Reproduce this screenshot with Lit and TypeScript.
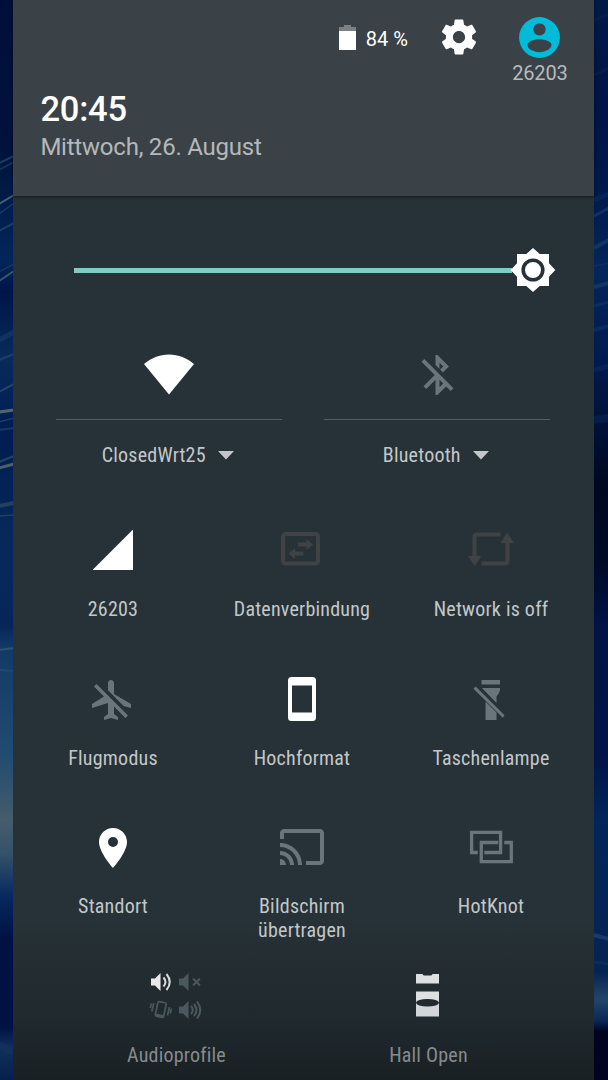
import { LitElement, html, svg, css } from "lit";
import { customElement, property } from "lit/decorators.js";

interface Icon { w: number; h: number; x?: number; y?: number; body: unknown }

/* x and y are the view box origin; they balance glyphs whose ink is off centre. */
const ICONS: Record<string, Icon> = {
  wifi: { w: 50, h: 40, y: 0.5, body: svg`<path fill="#fff" d="M0 9.6C7 3.600 15.500 0 25 0s18 3.600 25 9.600L25 40z"/>` },
  bluetooth: { w: 24, h: 24, x: -0.25, body: svg`<path fill="#68757b" d="M13 5.830l1.880 1.880-1.600 1.600 1.410 1.410 3.020-3.020L12 2h-1v5.030l2 2v-3.200zM5.410 4L4 5.410 10.590 12 5 17.590 6.410 19 11 14.410V22h1l4.290-4.290 2.300 2.290L20 18.590 5.410 4zM13 18.170v-3.760l1.880 1.880L13 18.170z"/>` },
  signal: { w: 40, h: 40, body: svg`<path fill="#fff" d="M0 40V39.500L39.500 0H40V40z"/>` },
  data: { w: 40, h: 34, x: 1, y: 1, body: svg`<rect x="2" y="2" width="35" height="29.500" rx="2.500" fill="none" stroke="#404243" stroke-width="4"/>
    <path fill="#404243" d="M17 10.500h8.500V7L32 12.700l-6.500 5.300v-3.500H17zM22.500 19.500H14V16l-6.500 5.500L14 27v-3.500h8.500z"/>` },
  network: { w: 46, h: 34, y: 1, body: svg`<path fill="none" stroke="#404243" stroke-width="4" d="M32.500 2.500H9Q6.500 2.500 6.500 5V25M13.500 31.500H36.500Q39.500 31.500 39.500 28.500V9"/>
    <path fill="#404243" d="M0 24h13.500L6.700 34zM32.500 11h13.500L39.200 0.500z"/>` },
  airplane: { w: 24, h: 24, x: 0.5, y: -0.5, body: svg`<path fill="#68757b" d="M13 9V3.500c0-.830-.670-1.500-1.500-1.500S10 2.670 10 3.500v3.680l7.830 7.830L21.500 16v-2zM3 5.270l4.990 4.990L2 14v2l8-2.500V19l-2 1.500V22l3.500-1 3.500 1v-1.500L13 19v-3.730L18.730 21 20 19.730 4.270 4z"/>` },
  portrait: { w: 28, h: 44, body: svg`<path fill="#fff" fill-rule="evenodd" d="M3.500 0h21Q28 0 28 3.500v37Q28 44 24.500 44h-21Q0 44 0 40.500v-37Q0 0 3.500 0zM4 8.500V35.500H24V8.500z"/>` },
  flashlight: { w: 31, h: 40, x: 1.5, y: -1, body: svg`<path fill="#68757b" d="M8 0h18.500v4.500H8zM8.500 8h18v1.500Q26.500 12 23 16.500V23zM12 21.500L23 32.500V40H12zM2.200 6.500L31 35.300 29.300 37.700 0 8.700z"/>` },
  place: { w: 24, h: 24, y: -0.5, body: svg`<path fill="#fff" d="M12 2C8.130 2 5 5.130 5 9c0 5.250 7 13 7 13s7-7.750 7-13c0-3.870-3.130-7-7-7zm0 9.500a2.500 2.500 0 0 1 0-5 2.500 2.500 0 0 1 0 5z"/>` },
  cast: { w: 24, h: 24, body: svg`<path fill="#68757b" d="M21 3H3c-1.100 0-2 .900-2 2v3h2V5h18v14h-7v2h7c1.100 0 2-.900 2-2V5c0-1.100-.900-2-2-2zM1 18v3h3c0-1.660-1.340-3-3-3zm0-4v2c2.760 0 5 2.240 5 5h2c0-3.870-3.130-7-7-7zm0-4v2c4.970 0 9 4.030 9 9h2c0-6.080-4.930-11-11-11z"/>` },
  hotknot: { w: 44, h: 34, x: -0.8, y: -0.5, body: svg`<g fill="none" stroke="#68757b" stroke-width="3.300"><path d="M8 22H1.800V1.800H30.800V22H14.500"/><path d="M28.500 12H11.500V31.200H41.500V12H34.500"/></g>` },
  audio: { w: 52, h: 46, body: svg`
    <path fill="#e9e9e9" d="M1 5.500h4L10.500 0V18L5 12.500H1z"/>
    <g fill="none" stroke="#d9dbdb" stroke-width="2"><path d="M13.500 4.500q4 4.500 0 9M16.500 1q6.500 8 0 16"/></g>
    <g fill="#4a5860"><path d="M29 5.500h4L38.500 0V18L33 12.500H29zM29 33.500h4l5.500-5.500V46L33 40.500h-4z"/></g>
    <g fill="none" stroke="#4a5860" stroke-width="2"><path d="M43 5.500l7 7M50 5.500l-7 7M41 33q3.500 4 0 8M44 31q5 6 0 12M47 28.500q6.500 8.500 0 17"/></g>
    <g fill="none" stroke="#4a5860" stroke-width="1.700"><rect x="6.500" y="29" width="8.500" height="15" rx="1.500" transform="rotate(12 10.700 36.500)"/><path stroke-width="2.500" d="M6 41.800l7.500 1.600"/><path d="M3.800 30l-2 8.500M1.300 30.500l-1 4.500M17.500 42.500l2-8.500M20.200 40.500l1.200-5"/></g>` },
  hall: { w: 24, h: 43, x: 0.5, body: svg`<path fill="#dfe0e1" d="M.500 0H7q.500 1.500 2 1.500h6q1.500 0 2-1.500h6.500V9.500H.500zM.500 17.500h23V26H.500z"/><path fill="#d3d6d9" d="M.500 26h23V42.500H.500z"/><ellipse cx="12" cy="28.700" rx="11.500" ry="3.800" fill="#202a2f"/>` },
};

const drawIcon = (name: string, w: number, h: number) => {
  const i = ICONS[name];
  return html`<svg width=${w} height=${h} viewBox="${i.x ?? 0} ${i.y ?? 0} ${i.w} ${i.h}">${i.body}</svg>`;
};

@customElement("qs-tile")
class QsTile extends LitElement {
  @property() icon = "";
  @property() label = "";
  @property({ type: Number }) w = 48;
  @property({ type: Number }) h = 48;
  static styles = css`
    :host { display: flex; flex-direction: column; align-items: center; min-width: 0; }
    .icon { height: 48px; display: flex; align-items: center; justify-content: center; }
    .icon svg { display: block; overflow: visible; }
    .label { margin-top: 23px; text-align: center; white-space: pre-line; }
  `;
  render() {
    return html`<div class="icon">${drawIcon(this.icon, this.w, this.h)}</div>
      <div class="label">${this.label}</div>`;
  }
}

@customElement("app-root")
class AppRoot extends LitElement {
  static styles = css`
    :host {
      display: block; position: relative; width: 608px; height: 1080px; overflow: hidden;
      background: #001039; font-family: Roboto, sans-serif; color: #c3c7c9;
    }
    .wall { position: absolute; inset: 0; display: block; }
    .panel {
      position: relative; margin-left: 13.400px; height: 1080px; width: 581px; box-sizing: border-box;
      background: linear-gradient(#273238 0 920px, #232d32 960px, #1f292e 1020px, #192023 1080px);
    }
    .header { height: 196px; box-sizing: border-box; background: #3a4248; box-shadow: 0 1px 3px #0008; padding: 16px 26.500px 0 27px; }
    .status { display: flex; justify-content: flex-end; align-items: flex-start; height: 74px; }
    .battery { display: flex; align-items: center; gap: 9.500px; height: 42px; color: #fff; font-size: 20px; }
    .battery span { padding-top: 3px; }
    .gear { margin-left: 30.500px; }
    .gear svg, .battery svg, .user svg { display: block; }
    .user { margin-left: 31.500px; width: 56px; display: flex; flex-direction: column; align-items: center; font-size: 20px; line-height: 24px; letter-spacing: -.200px; color: #b7babd; }
    .user svg { margin-top: -3.500px; margin-bottom: -1px; }
    .time { font-size: 34.500px; line-height: 38px; font-weight: 500; letter-spacing: -.200px; color: #fff; }
    .date { font-size: 24px; line-height: 28px; margin-top: 5px; letter-spacing: -.220px; color: #b4b8ba; }
    .slider { height: 48px; margin: 50px 38.500px 0 60.600px; display: flex; align-items: center; }
    .track { flex: 1; height: 5px; background: #80cbc4; }
    .knob { display: block; margin: 0 -1px 0 -3px; }
    .tiles { font-family: "Roboto Condensed", Roboto, sans-serif; font-stretch: 75%; font-size: 20px; line-height: 24px; letter-spacing: .220px; }
    .two { display: grid; grid-template-columns: 226px 226px; column-gap: 42px; margin: 57px 0 0 42.600px; }
    .dual { display: flex; flex-direction: column; align-items: center; }
    .dualicon { height: 48px; display: flex; align-items: center; }
    .dualicon svg { display: block; overflow: visible; }
    .rule { width: 100%; height: 1px; background: #48606f; margin-top: 20px; }
    .name { display: flex; align-items: center; gap: 12.500px; margin-top: 23px; margin-right: 2px; }
    .grid { display: grid; grid-template-columns: repeat(3, 189px); grid-auto-rows: 148.500px; margin: 59px 0 0 5.100px; }
    .last { display: grid; grid-template-columns: 252px 252px; margin-left: 37.100px; color: #858b8e; }
  `;

  dual(icon: string, w: number, h: number, label: string) {
    return html`<div class="dual">
      <div class="dualicon">${drawIcon(icon, w, h)}</div>
      <div class="rule"></div>
      <div class="name"><span>${label}</span><svg width="16" height="9" viewBox="0 0 16 9"><path fill="#c3c7c9" d="M0 0h16L8 8.500z"/></svg></div>
    </div>`;
  }

  wallpaper() {
    const left: [number, number, number, string][] = [
      [163, 156, 2, "#23456a"], [170, 162, 1.5, "#1c4065"], [204, 195, 2, "#55747e"], [214, 203, 1.5, "#19406b"],
      [231, 223, 2, "#23466c"], [281, 271, 2, "#4a686f"], [272, 264, 1.5, "#173b68"], [340, 332, 5, "#123965"],
      [360, 354, 2, "#234568"], [392, 384, 2, "#2a4c6b"], [412, 410, 3, "#667773"], [422, 418, 1.5, "#23486c"],
      [430, 428, 2, "#174069"], [462, 456, 2, "#2b4d6a"], [468, 464, 3, "#61716f"], [506, 503, 4, "#294960"],
      [516, 515, 1.5, "#264a65"], [650, 648, 2, "#345774"], [670, 671, 2, "#234d73"], [1045, 1052, 8, "#14315b"],
    ];
    const right: [number, number, number, string][] = [
      [20, 14, 3, "#06204a"], [75, 68, 3, "#06204a"], [200, 194, 5, "#08275a"], [216, 208, 3, "#123968"],
      [248, 240, 4, "#143a68"], [266, 263, 2, "#0c3162"], [287, 283, 4, "#143b69"], [306, 302, 3, "#0c2f60"],
      [330, 326, 4, "#0b2d5e"], [370, 366, 5, "#08265a"], [420, 418, 8, "#06204d"], [935, 939, 4, "#1d416e"],
      [962, 964, 3, "#0d2e60"],
    ];
    return svg`
      <defs>
        <linearGradient id="l" x2="0" y2="1"><stop offset="0" stop-color="#000f3a"/><stop offset=".14" stop-color="#00133c"/><stop offset=".24" stop-color="#02265a"/><stop offset=".27" stop-color="#001448"/><stop offset=".33" stop-color="#082b5b"/><stop offset=".4" stop-color="#001c52"/><stop offset=".5" stop-color="#06295a"/><stop offset=".58" stop-color="#06265a"/><stop offset=".6" stop-color="#123a66"/><stop offset=".7" stop-color="#214c70"/><stop offset=".76" stop-color="#465c6b"/><stop offset=".79" stop-color="#34526a"/><stop offset=".83" stop-color="#06295f"/><stop offset=".87" stop-color="#001142"/><stop offset=".95" stop-color="#001142"/><stop offset=".97" stop-color="#10305c"/><stop offset="1" stop-color="#06204c"/></linearGradient>
        <linearGradient id="r" x2="0" y2="1"><stop offset="0" stop-color="#001a48"/><stop offset=".1" stop-color="#001445"/><stop offset=".18" stop-color="#001a4c"/><stop offset=".25" stop-color="#04265a"/><stop offset=".33" stop-color="#001b50"/><stop offset=".45" stop-color="#00081f"/><stop offset=".52" stop-color="#000a25"/><stop offset=".58" stop-color="#001344"/><stop offset=".7" stop-color="#001447"/><stop offset=".76" stop-color="#02255a"/><stop offset=".9" stop-color="#052452"/><stop offset=".925" stop-color="#23446a"/><stop offset=".945" stop-color="#0a2856"/><stop offset=".955" stop-color="#00041f"/><stop offset="1" stop-color="#00041f"/></linearGradient>
      </defs>
      <rect width="14" height="1080" fill="url(#l)"/><rect x="594" width="14" height="1080" fill="url(#r)"/>
      ${left.map(([a, b, w, c]) => svg`<path d="M-1 ${a}L14 ${b}" stroke=${c} stroke-width=${w} opacity=".8"/>`)}
      ${right.map(([a, b, w, c]) => svg`<path d="M594 ${a}L609 ${b}" stroke=${c} stroke-width=${w} opacity=".8"/>`)}`;
  }

  render() {
    return html`
      <svg class="wall" width="608" height="1080">${this.wallpaper()}</svg>
      <div class="panel">
        <div class="header">
          <div class="status">
            <div class="battery">
              <svg width="17" height="25" viewBox="0 0 17 25"><path fill="#7b8184" d="M5 0h7v2h5v4H0V2h5z"/><path fill="#fff" d="M0 6h17v19H0z"/></svg>
              <span>84 %</span>
            </div>
            <div class="gear"><svg width="42" height="42" viewBox="0 0 24 24"><path fill="#fff" d="M19.430 12.980c.040-.320.070-.640.070-.980s-.030-.660-.070-.980l2.110-1.650c.190-.150.240-.420.120-.640l-2-3.460c-.120-.220-.390-.300-.610-.220l-2.490 1c-.520-.400-1.080-.730-1.690-.980l-.380-2.650C14.460 2.180 14.250 2 14 2h-4c-.250 0-.460.180-.490.420l-.380 2.650c-.610.250-1.170.590-1.690.980l-2.490-1c-.230-.090-.490 0-.610.220l-2 3.460c-.130.220-.070.490.120.640l2.110 1.650c-.040.320-.070.650-.070.980s.030.660.070.980l-2.110 1.650c-.190.150-.240.420-.120.640l2 3.460c.120.220.390.300.610.220l2.490-1c.520.400 1.080.730 1.690.980l.380 2.650c.030.240.240.420.490.420h4c.250 0 .460-.180.490-.420l.380-2.650c.610-.250 1.170-.590 1.690-.980l2.490 1c.230.090.490 0 .610-.220l2-3.460c.120-.220.070-.490-.120-.640l-2.110-1.650zM12 15.500c-1.930 0-3.500-1.570-3.500-3.500s1.570-3.500 3.500-3.500 3.500 1.570 3.500 3.500-1.570 3.500-3.500 3.500z"/></svg></div>
            <div class="user">
              <svg width="49" height="49" viewBox="0 0 24 24"><circle cx="12" cy="12" r="10" fill="#00bcd9"/><circle cx="12" cy="8" r="3" fill="#3a4248"/><path fill="#3a4248" d="M12 12.800c3 0 5.900 1.200 5.900 2.900S15 19.200 12 19.200s-5.900-1.700-5.900-3.500 2.900-2.900 5.900-2.900z"/></svg>
              <span>26203</span>
            </div>
          </div>
          <div class="time">20:45</div>
          <div class="date">Mittwoch, 26. August</div>
        </div>
        <div class="slider">
          <div class="track"></div>
          <svg class="knob" width="48" height="48" viewBox="0 0 48 48"><path fill="#fff" d="M24 2l6.700 6H40v9.300L46.300 24 40 30.700V40h-9.300L24 46l-6.700-6H8v-9.300L1.700 24 8 17.300V8h9.300z"/><circle cx="24" cy="24" r="9.800" fill="none" stroke="#273238" stroke-width="3.600"/></svg>
        </div>
        <div class="tiles">
          <div class="two">${this.dual("wifi", 50, 40, "ClosedWrt25")}${this.dual("bluetooth", 48, 48, "Bluetooth")}</div>
          <div class="grid">
            <qs-tile icon="signal" w="40" h="40" label="26203"></qs-tile>
            <qs-tile icon="data" w="40" h="34" label="Datenverbindung"></qs-tile>
            <qs-tile icon="network" w="46" h="34" label="Network is off"></qs-tile>
            <qs-tile icon="airplane" label="Flugmodus"></qs-tile>
            <qs-tile icon="portrait" w="28" h="44" label="Hochformat"></qs-tile>
            <qs-tile icon="flashlight" w="31" h="40" label="Taschenlampe"></qs-tile>
            <qs-tile icon="place" label="Standort"></qs-tile>
            <qs-tile icon="cast" label=${"Bildschirm\nübertragen"}></qs-tile>
            <qs-tile icon="hotknot" w="44" h="34" label="HotKnot"></qs-tile>
          </div>
          <div class="last">
            <qs-tile icon="audio" w="52" h="46" label="Audioprofile"></qs-tile>
            <qs-tile icon="hall" w="24" h="43" label="Hall Open"></qs-tile>
          </div>
        </div>
      </div>`;
  }
}
